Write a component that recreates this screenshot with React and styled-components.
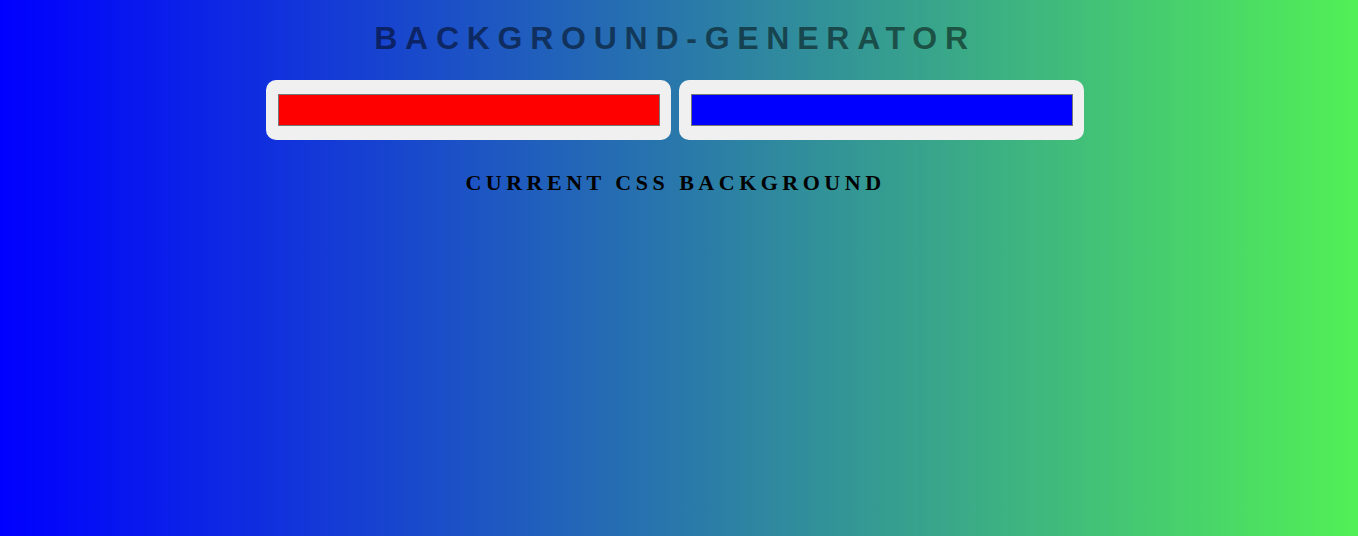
import React, { useState } from "react";
import styled, { createGlobalStyle } from "styled-components";

const GlobalStyle = createGlobalStyle`
  html, body {
    margin: 0;
    padding: 0;
    min-height: 100%;
  }
  body {
    min-height: 100vh;
    background: linear-gradient(to right, #0000ff, rgb(82, 240, 86));
    background-attachment: fixed;
    font-family: "Liberation Sans", Arial, sans-serif;
  }
`;

const Page = styled.main`
  box-sizing: border-box;
  min-height: 100vh;
  padding-right: 8px;
  display: flex;
  flex-direction: column;
  align-items: center;
  text-align: center;
`;

const Title = styled.h1`
  margin: 0;
  padding-top: 20px;
  font-family: "Liberation Sans", Arial, sans-serif;
  font-weight: 700;
  font-size: 32px;
  line-height: 37px;
  letter-spacing: 7.74px;
  text-transform: uppercase;
  color: rgba(0, 0, 0, 0.5);
`;

const Pickers = styled.div`
  margin-top: 23px;
  display: flex;
  gap: 8.5px;
`;

const ColorInput = styled.input.attrs({ type: "color" })`
  appearance: none;
  -webkit-appearance: none;
  box-sizing: border-box;
  width: 404.5px;
  height: 60px;
  padding: 14px 11px 14px 12px;
  margin: 0;
  border: none;
  border-radius: 10px;
  background: #f0f0f0;
  cursor: pointer;

  &::-webkit-color-swatch-wrapper {
    padding: 0;
  }
  &::-webkit-color-swatch {
    border: 1px solid #777777;
    border-radius: 0;
  }
`;

const Caption = styled.h3`
  margin: 30px 0 0;
  padding-left: 1px;
  font-family: "Liberation Serif", "Times New Roman", serif;
  font-weight: 700;
  font-size: 22px;
  line-height: 25px;
  letter-spacing: 4.5px;
  text-transform: uppercase;
  color: #000;
`;

export default function App() {
  const [first, setFirst] = useState("#ff0000");
  const [second, setSecond] = useState("#0000ff");
  return (
    <>
      <GlobalStyle />
      <Page>
        <Title>Background-Generator</Title>
        <Pickers>
          <ColorInput
            value={first}
            onChange={(e) => setFirst(e.target.value)}
            aria-label="First color"
          />
          <ColorInput
            value={second}
            onChange={(e) => setSecond(e.target.value)}
            aria-label="Second color"
          />
        </Pickers>
        <Caption>Current CSS Background</Caption>
      </Page>
    </>
  );
}
